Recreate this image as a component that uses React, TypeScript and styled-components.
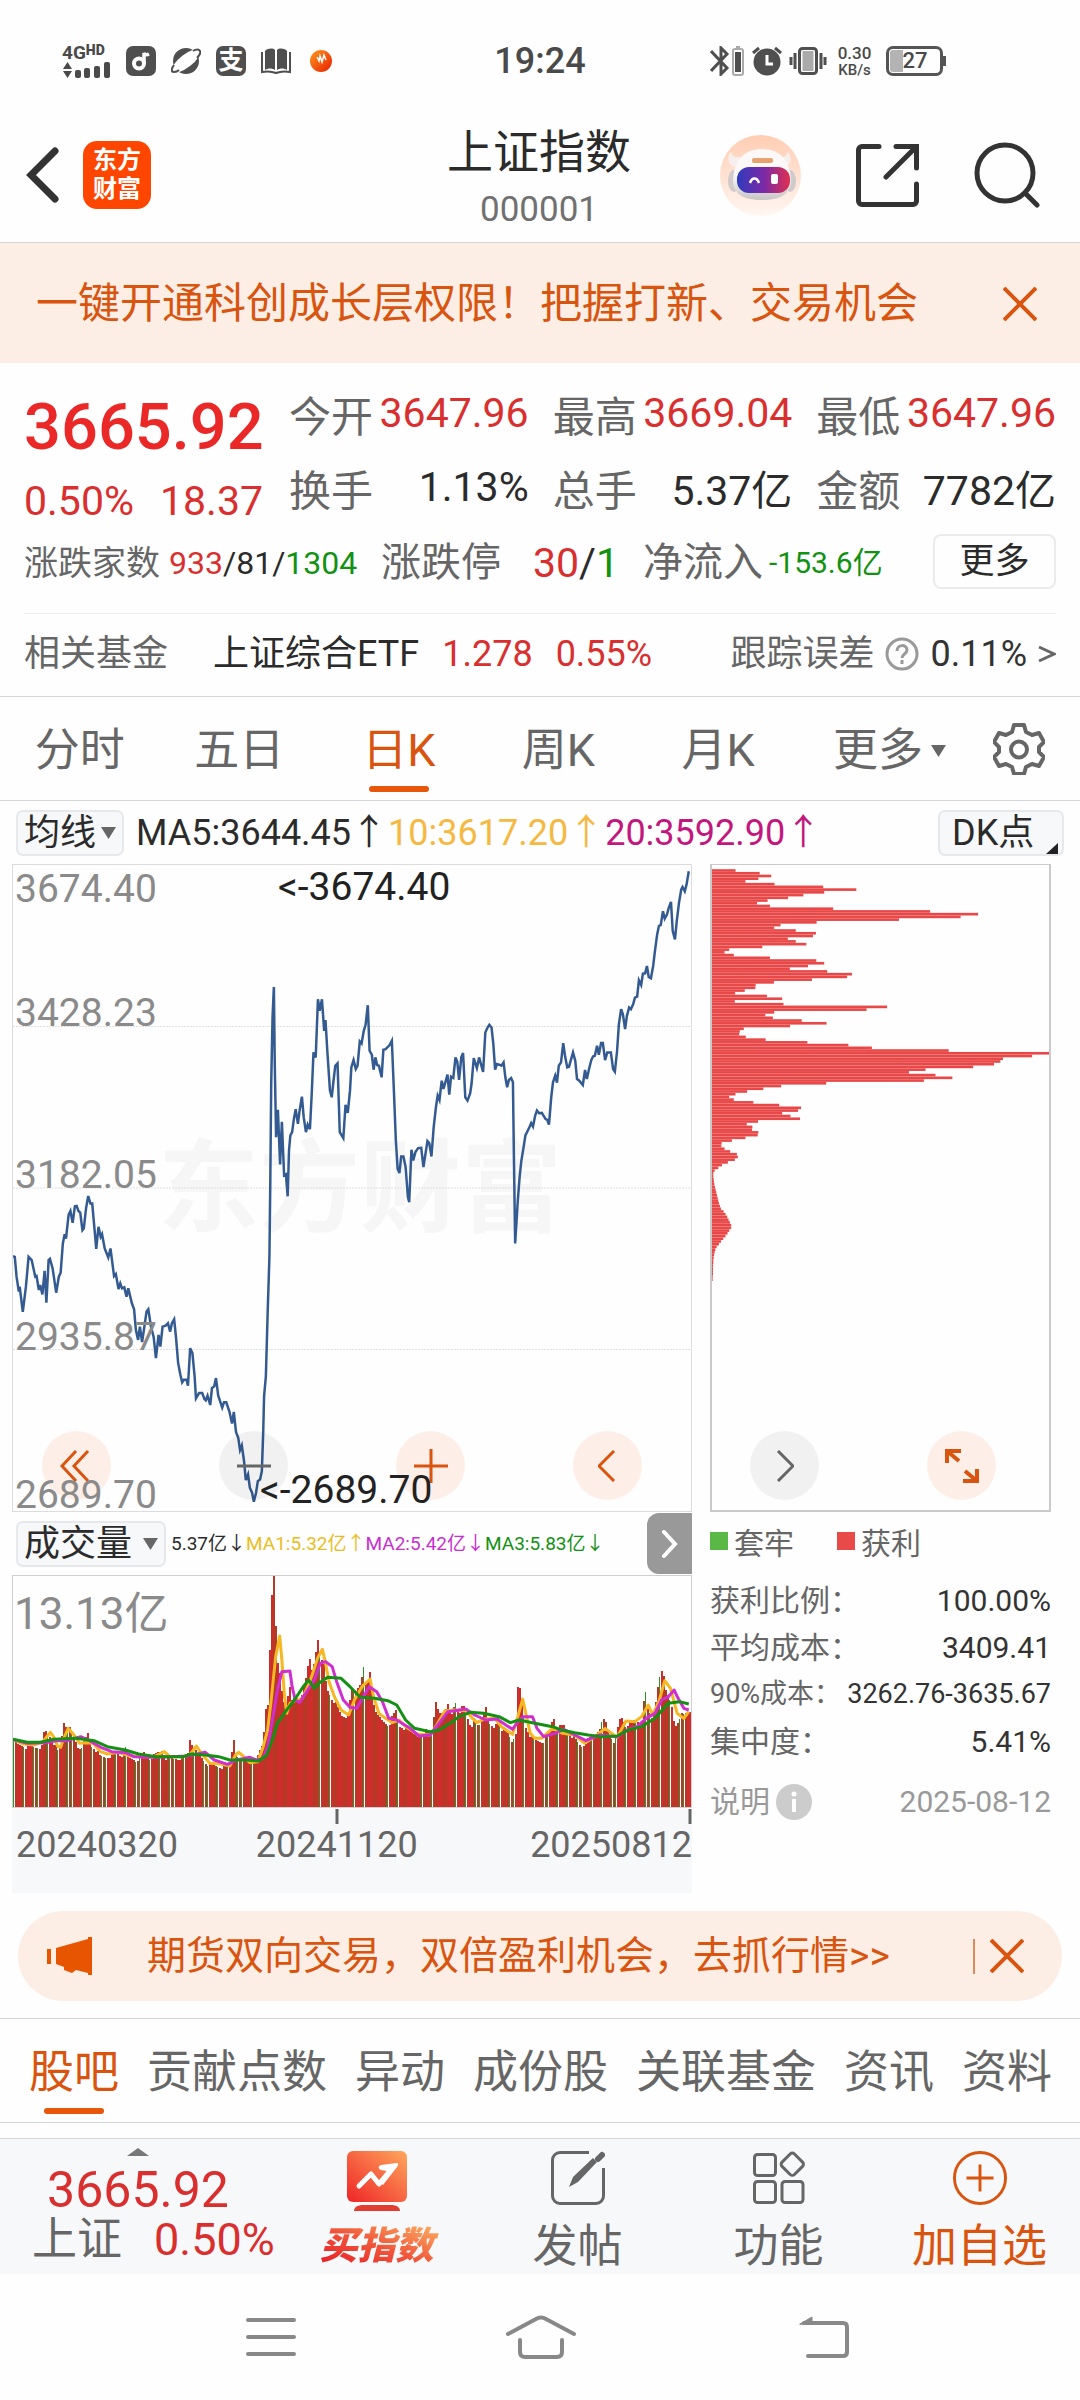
import React from "react";
import styled, { createGlobalStyle, css } from "styled-components";

const color = {
  ink: "#2b2b2b",
  text: "#333333",
  label: "#666666",
  muted: "#8a8a8a",
  rise: "#d92f2f",
  fall: "#129212",
  brand: "#d9540f",
  brandBright: "#e8560a",
  blush: "#fceee5",
  panel: "#f7f8fa",
  rule: "#d3d6d9",
};

const GlobalStyle = createGlobalStyle`
  * { box-sizing: border-box; }
  body {
    margin: 0;
    background: #fefefe;
    color: ${color.text};
    font-family: Roboto, "Noto Sans CJK SC", sans-serif;
  }
  button, select {
    font: inherit;
    color: inherit;
    background: none;
    border: 0;
    padding: 0;
    margin: 0;
    cursor: pointer;
  }
  a { color: inherit; text-decoration: none; }
  svg { display: block; flex: none; }
  h1, p, dl, dd, dt { margin: 0; font-weight: 400; }
`;

const Page = styled.div`
  display: flex;
  flex-direction: column;
  overflow: hidden;
`;

/* ---------- status bar ---------- */

const StatusBar = styled.div`
  display: grid;
  grid-template-columns: 1fr auto 1fr;
  align-items: center;
  height: 122px;
  padding: 0 62px;
  color: #4a4a4a;
`;

const StatusGroup = styled.div`
  display: flex;
  align-items: center;
  gap: 15px;
`;

const StatusRight = styled(StatusGroup)`
  gap: 7px;
  padding-left: 124px;
`;

const Clock = styled.time`
  font-size: 36px;
  font-weight: 500;
  line-height: 40px;
`;

const Signal = styled.div`
  width: 49px;
`;

const SignalText = styled.div`
  display: flex;
  align-items: flex-start;
  font-size: 19px;
  line-height: 18px;
  font-weight: 700;
`;

const SignalSup = styled.span`
  font-size: 14px;
  line-height: 12px;
  font-weight: 900;
`;

const NetSpeed = styled.div`
  font-size: 17px;
  line-height: 18px;
  font-weight: 500;
  text-align: center;
  margin: 0 8px 0 4px;
`;

const NetUnit = styled.div`
  font-size: 15px;
  line-height: 16px;
`;

const Battery = styled.div`
  display: flex;
  align-items: center;
`;

const BatteryBody = styled.div`
  width: 57px;
  height: 30px;
  border: 3px solid #555;
  border-radius: 7px;
  padding: 1px;
  font-size: 22px;
  line-height: 22px;
  font-weight: 500;
  text-align: center;
  background: linear-gradient(to right, #b3b3b3 13px, transparent 13px) content-box;
`;

const BatteryTip = styled.div`
  width: 3px;
  height: 10px;
  background: #555;
`;

/* ---------- header ---------- */

const Header = styled.header`
  display: grid;
  grid-template-columns: 1fr auto 1fr;
  align-items: start;
  height: 121px;
  padding: 0 40px 0 26px;
  border-bottom: 1px solid ${color.rule};
`;

const HeaderSide = styled.div<{ $end?: boolean }>`
  display: flex;
  align-items: center;
  height: 106px;
  gap: ${(p) => (p.$end ? 55 : 23)}px;
  justify-content: ${(p) => (p.$end ? "flex-end" : "flex-start")};
`;

const Brand = styled.div`
  width: 68px;
  height: 68px;
  padding: 5px 0;
  border-radius: 14px;
  background: #ff4600;
  color: #fff;
  font-size: 24px;
  line-height: 29px;
  font-weight: 700;
  text-align: center;
`;

const TitleBlock = styled.div`
  text-align: center;
  padding-left: 12px;
`;

const Title = styled.h1`
  font-size: 46px;
  line-height: 60px;
  color: ${color.ink};
`;

const Code = styled.p`
  font-size: 35px;
  line-height: 56px;
  color: #707070;
`;

/* ---------- top notice ---------- */

const Notice = styled.aside`
  display: flex;
  align-items: center;
  justify-content: space-between;
  height: 120px;
  padding: 2px 43px 0 36px;
  background: ${color.blush};
  color: ${color.brand};
  font-size: 42px;
  line-height: 60px;
`;

/* ---------- quote ---------- */

const Quote = styled.section`
  padding: 13px 24px 0;
  border-bottom: 1px solid ${color.rule};
`;

const QuoteGrid = styled.div`
  display: grid;
  grid-template-columns: 241px 1fr 1fr 1fr;
  column-gap: 24px;
  height: 158px;
`;

const PriceBlock = styled.div`
  padding-top: 14px;
  color: ${color.rise};
`;

const Price = styled.div`
  font-size: 65px;
  line-height: 74px;
  font-weight: 500;
  color: #ea2828;
  margin-bottom: 4px;
`;

const Change = styled.div`
  display: flex;
  justify-content: space-between;
  padding-right: 2px;
  font-size: 41px;
  line-height: 66px;
`;

const Cell = styled.div`
  display: flex;
  align-items: center;
  justify-content: space-between;
  height: 74px;
`;

const Tone = styled.span<{ $tone: keyof typeof color; $size?: number }>`
  color: ${(p) => color[p.$tone]};
  ${(p) => p.$size && css`font-size: ${p.$size}px;`}
`;

const Breadth = styled.div`
  display: grid;
  grid-template-columns: 333px 238px 1fr 123px;
  column-gap: 24px;
  align-items: center;
  height: 55px;
  margin-bottom: 24px;
  line-height: 52px;
`;

const BreadthItem = styled.div<{ $gap?: number }>`
  display: flex;
  align-items: center;
  justify-content: ${(p) => (p.$gap ? "flex-start" : "space-between")};
  gap: ${(p) => p.$gap ?? 0}px;
  padding-top: 3px;
  white-space: nowrap;
`;

const MoreButton = styled.button`
  height: 55px;
  border: 2px solid #ebebeb;
  border-radius: 8px;
  font-size: 35px;
  line-height: 48px;
  color: ${color.ink};
`;

const FundRow = styled.a`
  display: flex;
  align-items: center;
  height: 83px;
  padding-bottom: 2px;
  border-top: 1px solid #f0f0f0;
  font-size: 36px;
  line-height: 50px;
  white-space: nowrap;
`;

const FundName = styled.span`
  margin: 0 23px 0 45px;
  color: ${color.ink};
`;

const FundPrice = styled.span`
  margin-right: 23px;
`;

const FundError = styled.span`
  display: flex;
  align-items: center;
  gap: 11px;
  margin-left: auto;
`;

/* ---------- tabs ---------- */

const PeriodTabs = styled.nav`
  display: grid;
  grid-template-columns: repeat(6, 160fr) 123fr;
  height: 104px;
  border-bottom: 1px solid ${color.rule};
`;

const Tab = styled.button<{ $active?: boolean; $shift?: boolean }>`
  display: flex;
  flex-direction: column;
  align-items: center;
  padding-top: 24px;
  padding-left: ${(p) => (p.$shift ? 24 : 0)}px;
  font-size: 45px;
  line-height: 60px;
  white-space: nowrap;
  color: ${(p) => (p.$active ? color.brand : color.label)};

  &::after {
    content: "";
    width: 60px;
    height: 6px;
    margin-top: 5px;
    border-radius: 3px;
    background: ${(p) => (p.$active ? color.brandBright : "transparent")};
  }
`;

const TabLabel = styled.span`
  display: flex;
  align-items: center;
  gap: 8px;
`;

const IconButton = styled.button`
  display: grid;
  place-items: center;
`;

const SectionTabs = styled.nav`
  display: flex;
  gap: 28px;
  height: 105px;
  padding: 0 29px;
  border-top: 1px solid ${color.rule};
  border-bottom: 1px solid ${color.rule};
`;

/* ---------- indicator bars ---------- */

const AverageBar = styled.div`
  display: flex;
  align-items: center;
  height: 63px;
  padding: 0 16px;
  font-size: 36px;
  line-height: 46px;
  white-space: nowrap;
`;

const chip = css`
  height: 46px;
  border: 2px solid #e6e8eb;
  border-radius: 7px;
  background: ${color.panel};
  color: ${color.ink};
  font-size: 36px;
  line-height: 42px;
`;

const PickerBox = styled.span<{ $width: number }>`
  display: grid;
  align-items: center;
  width: ${(p) => p.$width}px;
  flex: none;

  > select, > svg { grid-area: 1 / 1; }
  > svg { justify-self: end; margin-right: 8px; pointer-events: none; }
`;

const Picker = styled.select`
  ${chip}
  width: 100%;
  padding: 0 0 0 6px;
  appearance: none;
`;

const DkButton = styled.button`
  ${chip}
  display: flex;
  align-items: flex-end;
  justify-content: space-between;
  width: 126px;
  margin-left: auto;
  padding: 0 4px 0 12px;
`;

const Averages = styled.div<{ $size: number; $gap: number }>`
  display: flex;
  gap: ${(p) => p.$gap}px;
  padding-left: ${(p) => (p.$size > 30 ? 12 : 5)}px;
  font-size: ${(p) => p.$size}px;
`;

const Average = styled.span<{ $color: string }>`
  color: ${(p) => p.$color};
`;

/* ---------- charts ---------- */

const Charts = styled.section`
  position: relative;
  display: grid;
  grid-template-columns: 680fr 341fr;
  column-gap: 18px;
  padding: 0 29px 0 12px;
`;

const PriceFrame = styled.div`
  position: relative;
  height: 648px;
  border: 1px solid #dcdcdc;
`;

const CostFrame = styled.div`
  height: 648px;
  border: 2px solid #cacaca;
  border-top-width: 1px;
`;

const PlotLayer = styled.div`
  position: absolute;
  inset: 0;
`;

const Plot = styled.svg`
  width: 100%;
  height: 100%;
`;

const Watermark = styled.div`
  position: absolute;
  inset: 250px auto auto 145px;
  font-size: 101px;
  line-height: 150px;
  font-weight: 700;
  color: #f6f6f6;
`;

const ScaleLabel = styled.span<{ $top: number }>`
  position: absolute;
  left: 2px;
  top: ${(p) => p.$top}px;
  z-index: 2;
  font-size: 39px;
  line-height: 40px;
  color: ${color.muted};
  pointer-events: none;
`;

const Extreme = styled(ScaleLabel)<{ $left: number }>`
  left: ${(p) => p.$left}px;
  color: #222;
`;

const ChartTools = styled.div`
  position: absolute;
  top: 567px;
  left: 42px;
  right: 84px;
  display: flex;
  justify-content: space-between;
`;

const RoundTool = styled.button<{ $quiet?: boolean }>`
  display: grid;
  place-items: center;
  width: 69px;
  height: 69px;
  border-radius: 50%;
  color: ${(p) => (p.$quiet ? "#666" : color.brand)};
  background: ${(p) => (p.$quiet ? "rgba(0,0,0,.05)" : "rgba(240,90,10,.09)")};
`;

const VolumeBar = styled.div`
  display: flex;
  align-items: center;
  height: 63px;
  padding-left: 4px;
  line-height: 46px;
  white-space: nowrap;
`;

const Expand = styled.button`
  display: grid;
  place-items: center;
  width: 45px;
  height: 61px;
  margin-left: auto;
  border-radius: 12px 0 0 12px;
  background: #999;
  color: #fff;
`;

const VolumeFrame = styled.div`
  position: relative;
  height: 233px;
  border: 1px solid #cfcfcf;
`;

const VolumeMax = styled.span`
  position: absolute;
  left: 1px;
  top: 13px;
  font-size: 44px;
  line-height: 50px;
  color: ${color.muted};
`;

const Axis = styled.div`
  height: 85px;
  background: ${color.panel};
`;

const AxisDates = styled.div`
  display: flex;
  padding: 0 0 0 4px;
  font-size: 36px;
  line-height: 40px;
  color: ${color.label};

  > :nth-child(2) { margin-left: 78px; }
  > :last-child { margin-left: auto; }
`;

const Legend = styled.div`
  display: flex;
  align-items: center;
  gap: 43px;
  height: 57px;
  font-size: 30px;
  color: ${color.label};
`;

const LegendItem = styled.span<{ $color: string }>`
  display: flex;
  align-items: center;
  gap: 6px;

  &::before {
    content: "";
    width: 18px;
    height: 18px;
    background: ${(p) => p.$color};
  }
`;

const Stats = styled.dl`
  padding-top: 8px;
`;

const Stat = styled.div<{ $size?: number }>`
  display: flex;
  justify-content: space-between;
  font-size: ${(p) => p.$size ?? 30}px;
  line-height: 47px;
  white-space: nowrap;

  dt { color: ${color.label}; }
`;

const StatFoot = styled.div`
  display: flex;
  align-items: center;
  justify-content: space-between;
  padding-top: 13px;
  font-size: 30px;
  line-height: 47px;
  color: #999;
`;

const Explain = styled.button`
  display: flex;
  align-items: center;
  gap: 6px;
`;

/* ---------- promo ---------- */

const Promo = styled.aside`
  display: flex;
  align-items: center;
  height: 90px;
  margin: 18px 18px 17px;
  padding: 0 38px 0 28px;
  border-radius: 45px;
  background: ${color.blush};
  color: ${color.brand};
  font-size: 39px;
  line-height: 50px;
  white-space: nowrap;
`;

const PromoLink = styled.a`
  margin-left: 54px;
`;

const PromoClose = styled(IconButton)`
  margin-left: auto;
  padding-left: 15px;
  height: 35px;
  border-left: 2px solid #e08a5c;
`;

/* ---------- bottom bar ---------- */

const BottomBar = styled.footer`
  display: grid;
  grid-template-columns: 276fr repeat(4, 201fr);
  height: 136px;
  margin-top: 15px;
  border-top: 1px solid ${color.rule};
  background: ${color.panel};
`;

const IndexButton = styled.button`
  display: flex;
  flex-direction: column;
  align-items: center;
  padding-top: 9px;
`;

const IndexPrice = styled.span`
  font-size: 50px;
  line-height: 50px;
  margin-top: 9px;
  color: ${color.rise};
`;

const IndexLine = styled.span`
  display: flex;
  gap: 32px;
  margin-left: 32px;
  font-size: 45px;
  line-height: 50px;
  align-self: flex-start;
  color: ${color.label};
`;

const Action = styled.button<{ $brand?: boolean }>`
  display: flex;
  flex-direction: column;
  align-items: center;
  padding-top: 12px;
  font-size: 45px;
  line-height: 60px;
  color: ${(p) => (p.$brand ? color.brand : color.label)};

  > svg { margin-bottom: 12px; }
`;

const BuyLabel = styled.span`
  padding: 0 6px;
  font-size: 38px;
  line-height: 46px;
  font-weight: 900;
  font-style: italic;
  color: transparent;
  background: linear-gradient(20deg, #e8262a 15%, #f0553a 50%, #fba35c 90%);
  background-clip: text;
  -webkit-background-clip: text;
`;

const SystemNav = styled.nav`
  display: flex;
  align-items: center;
  justify-content: space-between;
  height: 126px;
  padding: 0 230px 0 245px;
  color: #888;
`;

/* ---------- data ---------- */

const PRICE_LINE =
  "28,1218 32,1220 36,1280 41,1325 43,1310 50,1386 57,1310 63,1220 70,1230 78,1280 81,1278 86,1320 89,1305 94,1333 99,1262 103,1358 108,1230 111,1226 117,1255 125,1328 131,1280 135,1268 140,1180 144,1152 147,1165 153,1093 157,1082 162,1118 167,1068 171,1067 175,1082 179,1087 184,1140 187,1135 192,1075 197,1037 202,1060 206,1060 215,1196 220,1130 225,1160 228,1152 234,1195 242,1222 247,1195 255,1278 259,1272 265,1317 269,1300 273,1315 278,1312 283,1340 287,1315 295,1360 300,1378 304,1440 309,1470 313,1430 318,1477 328,1385 332,1378 338,1430 344,1462 349,1525 355,1455 359,1490 364,1430 371,1427 376,1420 381,1445 385,1420 390,1408 394,1460 399,1540 404,1575 408,1598 412,1590 418,1590 421,1608 426,1495 431,1510 436,1580 439,1646 446,1630 453,1630 458,1648 461,1652 465,1638 471,1666 475,1615 480,1610 484,1585 489,1638 498,1674 502,1658 507,1658 514,1685 520,1722 524,1687 529,1748 534,1765 538,1802 542,1788 547,1835 551,1892 556,1875 560,1915 565,1930 569,1957 574,1930 578,1895 583,1890 587,1865 590,1750 592,1640 596,1580 600,1390 604,1220 606,990 608,700 611,500 614,408 616,640 619,860 623,778 628,942 632,814 637,975 641,972 645,1038 648,900 651,855 655,845 659,805 663,776 668,820 672,778 677,738 681,800 686,845 690,822 695,836 699,730 703,605 708,620 713,445 717,480 722,445 727,540 730,508 734,600 740,720 744,740 748,690 752,645 757,638 762,845 770,863 775,763 780,787 785,720 788,650 793,628 798,655 802,645 807,572 811,578 816,540 820,522 825,463 829,600 834,612 838,657 842,620 846,643 850,645 856,680 860,597 865,595 874,583 879,570 883,700 888,870 892,955 896,968 900,918 905,918 910,950 915,1040 918,1056 923,898 927,930 932,905 938,893 945,892 950,950 959,872 963,878 968,918 973,830 978,770 982,735 986,748 991,690 995,715 1004,672 1008,732 1012,678 1017,682 1022,620 1026,633 1030,688 1035,620 1039,607 1044,740 1049,750 1055,728 1058,700 1063,622 1070,652 1075,620 1084,664 1089,545 1094,530 1098,522 1103,530 1107,580 1111,657 1115,640 1120,642 1125,645 1130,635 1134,680 1138,710 1142,688 1147,682 1151,695 1153,900 1156,1180 1162,1050 1166,980 1170,930 1175,890 1179,855 1188,830 1192,818 1196,828 1201,795 1205,780 1210,788 1216,787 1224,805 1228,808 1232,822 1237,740 1241,695 1246,675 1250,696 1254,645 1259,635 1264,577 1268,615 1273,650 1277,648 1286,605 1291,630 1295,685 1300,690 1308,703 1313,658 1317,685 1322,655 1327,628 1331,617 1335,615 1340,585 1344,612 1349,577 1353,577 1358,628 1363,605 1371,605 1376,655 1380,663 1385,600 1389,520 1394,475 1398,490 1403,535 1407,495 1412,470 1416,475 1421,460 1425,440 1430,437 1434,388 1439,402 1443,368 1448,367 1452,345 1456,378 1461,382 1466,345 1470,300 1475,250 1479,224 1483,222 1488,180 1492,202 1497,190 1501,170 1506,152 1510,240 1515,265 1519,210 1524,155 1529,115 1532,107 1537,120 1541,100 1546,60";

const COST_BARS = [
  71, 144, 179, 140, 101, 189, 336, 436, 339, 276, 230, 168, 136, 175, 366, 659, 804, 751, 565, 316, 207, 188, 253, 314,
  305, 229, 253, 285, 152, 52, 38, 66, 175, 315, 339, 290, 235, 348, 423, 408, 302, 187, 132, 131, 99, 70, 166, 212, 69,
  216, 529, 467, 188, 161, 184, 271, 346, 236, 96, 84, 82, 102, 162, 288, 412, 483, 715, 1018, 967, 879, 871, 852, 789,
  645, 595, 675, 726, 640, 345, 209, 155, 106, 71, 52, 66, 125, 203, 269, 260, 212, 237, 266, 139, 105, 122, 121, 140,
  138, 101, 60, 29, 28, 38, 55, 75, 78, 69, 48, 30, 19, 8, 4, 4, 5, 6, 7, 9, 11, 13, 15, 17, 19, 21, 24, 27, 35, 41, 46,
  50, 54, 58, 58, 52, 47, 41, 34, 27, 21, 14, 10, 8, 6, 5, 4, 4, 3, 3, 3, 3, 2, 2,
];

const VOLUME_TOPS: [number, number][] = [
  [28, 722], [60, 735], [95, 735], [99, 672], [104, 700], [112, 705], [125, 735], [132, 755], [140, 685], [144, 648],
  [148, 680], [155, 678], [162, 690], [175, 740], [185, 730], [198, 690], [204, 730], [215, 745], [225, 765], [240, 765],
  [262, 755], [272, 765], [279, 732], [290, 770], [305, 775], [324, 750], [335, 770], [355, 752], [364, 743], [372, 770],
  [395, 770], [420, 765], [427, 698], [432, 740], [445, 760], [465, 785], [490, 795], [515, 790], [525, 706], [530, 770],
  [545, 775], [575, 775], [580, 750], [590, 720], [593, 660], [598, 612], [603, 612], [607, 333], [613, 228], [617, 228],
  [619, 395], [623, 475], [628, 520], [633, 580], [640, 620], [650, 550], [655, 590], [665, 600], [675, 590], [690, 500],
  [696, 470], [700, 510], [705, 480], [713, 408], [720, 475], [727, 490], [733, 560], [745, 590], [755, 610], [765, 640],
  [778, 645], [785, 600], [790, 560], [797, 570], [808, 545], [816, 495], [822, 560], [830, 510], [838, 600], [848, 645],
  [860, 660], [872, 670], [888, 625], [895, 670], [910, 680], [925, 690], [940, 700], [950, 700], [957, 675], [965, 690],
  [972, 680], [977, 598], [985, 635], [995, 630], [1004, 604], [1012, 650], [1022, 595], [1030, 630], [1040, 612],
  [1050, 650], [1058, 680], [1063, 640], [1075, 680], [1090, 608], [1098, 670], [1110, 680], [1117, 645], [1125, 680],
  [1140, 695], [1150, 720], [1158, 690], [1161, 565], [1166, 553], [1171, 600], [1178, 670], [1190, 700], [1200, 715],
  [1220, 720], [1235, 680], [1242, 645], [1250, 680], [1265, 670], [1275, 690], [1290, 710], [1305, 735], [1320, 715],
  [1340, 690], [1358, 650], [1365, 690], [1380, 720], [1392, 650], [1396, 648], [1405, 670], [1425, 655], [1440, 660],
  [1444, 618], [1449, 565], [1454, 620], [1465, 650], [1474, 580], [1480, 540], [1484, 508], [1489, 508], [1494, 560],
  [1505, 590], [1515, 680], [1525, 655], [1532, 625], [1540, 640], [1552, 630],
];

const VOLUME_AVERAGES = [
  {
    color: "#f5b722",
    points:
      "28,718 50,732 75,735 95,725 112,697 120,712 128,738 135,742 142,715 152,685 165,705 178,730 195,728 208,730 225,755 240,762 265,757 290,768 320,770 345,770 368,755 380,770 410,770 425,765 440,738 450,758 470,790 495,792 515,798 528,765 535,757 545,768 560,788 578,785 590,740 600,690 608,600 618,470 627,408 632,480 638,590 643,640 650,610 665,600 678,595 690,560 700,525 712,475 723,448 730,490 738,545 750,590 765,630 782,645 795,600 812,560 830,537 838,590 850,640 865,655 880,668 895,660 910,680 935,702 965,705 980,675 998,633 1020,630 1045,632 1060,655 1070,668 1085,658 1110,655 1125,680 1150,703 1162,650 1173,597 1180,640 1190,700 1200,715 1215,715 1240,685 1262,700 1290,705 1312,730 1330,715 1358,685 1385,712 1405,663 1425,665 1440,650 1455,615 1465,645 1480,600 1492,542 1505,565 1520,640 1535,655 1546,635",
  },
  {
    color: "#cf2fcf",
    points:
      "28,718 60,730 100,728 125,722 150,722 180,710 200,722 225,742 250,755 280,758 300,770 340,772 380,770 420,768 460,757 480,780 510,793 530,780 560,772 575,780 590,775 600,740 612,650 622,570 632,515 650,513 655,560 662,600 672,607 690,570 705,540 718,490 730,485 745,500 755,545 770,600 785,622 800,625 815,590 828,560 845,575 858,605 872,655 890,660 920,685 940,708 965,705 985,670 1005,635 1045,627 1065,645 1090,660 1115,657 1150,688 1165,660 1175,650 1195,650 1205,685 1220,710 1245,700 1265,688 1290,705 1315,722 1345,705 1385,710 1410,688 1430,680 1450,655 1470,640 1485,600 1500,590 1513,570 1522,595 1535,625 1546,630",
  },
  {
    color: "#149014",
    points:
      "28,718 60,727 90,727 120,718 170,715 210,722 240,740 280,750 310,762 350,770 410,770 430,762 460,765 490,770 515,780 550,780 580,783 598,765 610,720 622,670 640,635 660,600 680,560 692,540 705,565 715,550 735,532 765,535 785,560 808,592 840,595 870,602 890,615 910,660 930,685 965,695 985,690 1010,670 1030,650 1055,637 1085,640 1120,650 1145,668 1165,660 1200,670 1240,680 1260,690 1290,698 1320,705 1350,710 1385,708 1410,690 1440,680 1470,655 1500,610 1525,605 1546,612",
  },
];

const BAR_COUNT = 339;
const PITCH = 1523 / BAR_COUNT;

function topAt(x: number) {
  const k = VOLUME_TOPS.findIndex(([px]) => px > x);
  if (k <= 0) return VOLUME_TOPS[0][1];
  const [x0, y0] = VOLUME_TOPS[k - 1];
  const [x1, y1] = VOLUME_TOPS[k];
  return y0 + ((y1 - y0) * (x - x0)) / (x1 - x0);
}

const VOLUME_BARS = Array.from({ length: BAR_COUNT }, (_, i) => {
  const x = 28 + i * PITCH;
  const limit = x > 565 && x < 680 ? 0 : x > 680 && x < 1030 ? 3 : 5;
  const down = (i * 37 + i * i * 13) % 17 < limit;
  const jitter = ((i * 29) % 7) * 2;
  const top = topAt(x + PITCH / 2) + (x > 600 && x < 620 ? 0 : jitter);
  const fill = down ? "#2f8f2a" : (i * i * 7 + i * 3) % 5 < 2 ? "#b53a26" : "#cf2c2c";
  return { x, top, fill, width: down ? PITCH / 2 : PITCH };
});

/* ---------- icons ---------- */

const Line = (p: React.SVGProps<SVGSVGElement>) => (
  <svg fill="none" stroke="currentColor" strokeWidth={3} aria-hidden="true" {...p} />
);

const Cross = () => (
  <Line width={34} height={34} viewBox="0 0 34 34" strokeWidth={4}>
    <path d="M1 1 33 33M33 1 1 33" />
  </Line>
);

const Down = ({ w = 15, h = 12 }) => (
  <svg width={w} height={h} viewBox="0 0 15 12" fill="#666" aria-hidden="true">
    <path d="M0 0h15L7.500 12z" />
  </svg>
);

const SignalBars = () => (
  <svg width="48" height="16" viewBox="0 0 48 16" fill="#4a4a4a">
    <path d="M5.500 0 10 7H1zM5.500 16 10 9H1z" />
    <rect x="13" y="8" width="6" height="8" rx="2" />
    <rect x="22" y="6" width="6" height="10" rx="2" />
    <rect x="32" y="4" width="6" height="12" rx="2" />
    <rect x="42" y="0" width="6" height="16" rx="2" />
  </svg>
);

const MusicApp = () => (
  <svg width="30" height="30" viewBox="0 0 30 30">
    <rect width="30" height="30" rx="7" fill="#4f4f4f" />
    <circle cx="13" cy="17.500" r="5" fill="none" stroke="#fff" strokeWidth="4" />
    <path d="M18 18V7c1 2 3 2 5 1" fill="none" stroke="#fff" strokeWidth="3.500" />
  </svg>
);

const Planet = () => (
  <svg width="30" height="30" viewBox="0 0 30 30">
    <circle cx="15" cy="15" r="13" fill="#4f4f4f" />
    <ellipse cx="15" cy="15" rx="17" ry="6.500" transform="rotate(-38 15 15)" fill="#fff" />
    <path d="M3 19c-3 4-3 7 0 7 2 0 4-1 5-2M22 5c3-2 6-2 7 0s-1 5-3 7" fill="none" stroke="#4f4f4f" strokeWidth="2" />
  </svg>
);

const PayTile = styled.span`
  display: grid;
  place-items: center;
  width: 30px;
  height: 30px;
  border-radius: 7px;
  background: #4f4f4f;
  color: #fff;
  font-size: 25px;
  line-height: 28px;
  font-weight: 700;
`;

const Book = () => (
  <svg width="30" height="26" viewBox="0 0 30 26" fill="#4f4f4f">
    <path d="M4 3C7 0 12 0 14 2v20c-3-2-7-2-10 0zM26 3c-3-3-8-3-10-1v20c3-2 7-2 10 0z" />
    <path d="M1 4v20c5-1 9-1 14 1 5-2 9-2 14-1V4" fill="none" stroke="#4f4f4f" strokeWidth="2" />
  </svg>
);

const Orb = () => (
  <svg width="30" height="22" viewBox="0 0 30 22">
    <defs>
      <linearGradient id="orb" x1="0" y1="0" x2="1" y2="1">
        <stop offset="0" stopColor="#ff9a1f" />
        <stop offset="1" stopColor="#e81c00" />
      </linearGradient>
    </defs>
    <circle cx="15" cy="11" r="11" fill="url(#orb)" />
    <path d="m11 7 2 4 1-5 2 6 2-7 2 5" fill="none" stroke="#fff" strokeWidth="1.500" />
  </svg>
);

const Bluetooth = () => (
  <svg width="35" height="30" viewBox="0 0 35 30">
    <path d="m1 5 16 17-6 6V2l6 6L1 25" fill="none" stroke="#4f4f4f" strokeWidth="3" />
    <rect x="23" y="3" width="10" height="26" rx="2" fill="#fff" stroke="#aaa" strokeWidth="2" />
    <path d="M26 1h4" stroke="#aaa" strokeWidth="2" />
    <rect x="25" y="6" width="6" height="20" fill="#4f4f4f" />
  </svg>
);

const Alarm = () => (
  <svg width="30" height="30" viewBox="0 0 30 30">
    <circle cx="15" cy="16" r="13.500" fill="#4f4f4f" />
    <path d="M15 9v9h6" fill="none" stroke="#fff" strokeWidth="3" />
    <path d="m1 7 6-5M29 7l-6-5" stroke="#4f4f4f" strokeWidth="3" />
  </svg>
);

const Vibrate = () => (
  <svg width="38" height="30" viewBox="0 0 38 30">
    <rect x="10.500" y="2.500" width="17" height="25" rx="3" fill="#fff" stroke="#4f4f4f" strokeWidth="3" />
    <rect x="13.500" y="5" width="11" height="20" fill="#aaa" />
    <path d="M6 7v16M2 11v8M32 7v16M36 11v8" stroke="#4f4f4f" strokeWidth="3" />
  </svg>
);

const Robot = () => (
  <svg width="81" height="81" viewBox="0 0 81 81">
    <defs>
      <linearGradient id="halo" x1="0" y1="0" x2="0" y2="1">
        <stop offset="0" stopColor="#ffcdb2" />
        <stop offset="1" stopColor="#fff6f1" />
      </linearGradient>
      <linearGradient id="visor" x1="0" y1="0" x2="1" y2="0">
        <stop offset="0" stopColor="#2f3bbd" />
        <stop offset=".5" stopColor="#7a2aa8" />
        <stop offset="1" stopColor="#e0304f" />
      </linearGradient>
      <linearGradient id="shell" x1="0" y1="0" x2="0" y2="1">
        <stop offset=".5" stopColor="#fbf8f7" />
        <stop offset="1" stopColor="#c9c4c6" />
      </linearGradient>
    </defs>
    <circle cx="40.500" cy="40.500" r="40.500" fill="url(#halo)" />
    <path d="M11 17c-5 6-3 15 7 16l7-11c-8 1-13 0-14-5zM68 17c5 6 3 15-7 16l-7-11c8 1 13 0 14-5z" fill="#f6efed" />
    <ellipse cx="14" cy="46" rx="6" ry="11" fill="#d0cacc" />
    <ellipse cx="70" cy="46" rx="6" ry="11" fill="#d0cacc" />
    <path d="M42 14c20 0 28 14 29 31 0 14-10 20-29 20S13 59 13 45c1-17 9-31 29-31z" fill="url(#shell)" />
    <rect x="32" y="23" width="21" height="5" rx="2" fill="#e6a36f" />
    <rect x="17" y="32" width="53" height="26" rx="12" fill="url(#visor)" />
    <path d="M30 48c2-6 7-6 9 0" fill="none" stroke="#fff" strokeWidth="2.500" />
    <rect x="51" y="39" width="7" height="10" rx="2" fill="#fff" />
  </svg>
);

const Gear = () => (
  <Line width={52} height={52} viewBox="0 0 52 52" strokeWidth={4} strokeLinejoin="round">
    <path d="M21 2h10l2 7 6 3 7-2 5 9-5 5v5l5 5-5 9-7-2-6 3-2 7H21l-2-7-6-3-7 2-5-9 5-5v-5l-5-5 5-9 7 2 6-3z" />
    <circle cx="26" cy="26.500" r="8" />
  </Line>
);

const Horn = () => (
  <svg width="47" height="40" viewBox="0 0 47 40" fill="#e85500" aria-hidden="true">
    <path d="M1 13h4v15H1zM10 12 42 3V1h4v38h-4v-2l-12-3-4 3-8-3v-3l-8-3z" />
  </svg>
);

const BuyIcon = () => (
  <svg width="60" height="60" viewBox="0 0 60 60" aria-hidden="true">
    <defs>
      <linearGradient id="buy" x1="0" y1="1" x2="1" y2="0">
        <stop offset="0" stopColor="#ee2427" />
        <stop offset="1" stopColor="#ffa75c" />
      </linearGradient>
    </defs>
    <rect width="60" height="51" rx="6" fill="url(#buy)" />
    <path d="M7 60c0-4 4-6 9-6h28c5 0 9 2 9 6z" fill="#e33c30" />
    <path d="m12 35 12-12 8 10 10-12" fill="none" stroke="#fff" strokeWidth="5" strokeLinecap="round" strokeLinejoin="round" />
    <path d="M34 14 50 12c2 0 1 3 0 4L36 34l-4-3 8-11-6-1c-3-1-3-4 0-5z" fill="#fff" />
  </svg>
);

const ComposeIcon = () => (
  <svg width="54" height="54" viewBox="0 0 54 54" fill="none" stroke="#666" strokeWidth="3" aria-hidden="true">
    <path d="M38 1.500H9A7.500 7.500 0 0 0 1.500 9v36A7.500 7.500 0 0 0 9 52.500h36a7.500 7.500 0 0 0 7.500-7.500V17" />
    <path d="m18 36 4-10L42 7l4 4-19 20z" fill="#666" stroke="none" />
    <path d="M47 8 51 4" strokeWidth="6" strokeLinecap="round" />
  </svg>
);

const GridIcon = () => (
  <svg width="54" height="54" viewBox="0 0 54 54" fill="none" stroke="#666" strokeWidth="3" aria-hidden="true">
    <rect x="2.500" y="3.500" width="21" height="21" rx="3" />
    <rect x="2.500" y="30.500" width="21" height="21" rx="3" />
    <rect x="30" y="30.500" width="21" height="21" rx="3" />
    <rect x="31.500" y="4.500" width="17.500" height="17.500" rx="3" transform="rotate(45 40.300 13.300)" />
  </svg>
);

/* ---------- page ---------- */

const SUMMARY = [
  { label: "今开", value: "3647.96", tone: "rise" },
  { label: "换手", value: "1.13%", tone: "ink" },
  { label: "最高", value: "3669.04", tone: "rise" },
  { label: "总手", value: "5.37亿", tone: "ink" },
  { label: "最低", value: "3647.96", tone: "rise" },
  { label: "金额", value: "7782亿", tone: "ink" },
] as const;

const STATS = [
  { label: "获利比例：", value: "100.00%" },
  { label: "平均成本：", value: "3409.41" },
  { label: "90%成本：", value: "3262.76-3635.67", size: 27 },
  { label: "集中度：", value: "5.41%" },
];

const PERIODS = ["分时", "五日", "日K", "周K", "月K"];
const SECTIONS = ["股吧", "贡献点数", "异动", "成份股", "关联基金", "资讯", "资料"];

const stroke = { vectorEffect: "non-scaling-stroke" as const, fill: "none" };

export default function App() {
  return (
    <Page>
      <GlobalStyle />

      <StatusBar>
        <StatusGroup>
          <Signal>
            <SignalText>
              4G<SignalSup>HD</SignalSup>
            </SignalText>
            <SignalBars />
          </Signal>
          <MusicApp />
          <Planet />
          <PayTile>支</PayTile>
          <Book />
          <Orb />
        </StatusGroup>
        <Clock>19:24</Clock>
        <StatusRight>
          <Bluetooth />
          <Alarm />
          <Vibrate />
          <NetSpeed>
            0.30<NetUnit>KB/s</NetUnit>
          </NetSpeed>
          <Battery>
            <BatteryBody>27</BatteryBody>
            <BatteryTip />
          </Battery>
        </StatusRight>
      </StatusBar>

      <Header>
        <HeaderSide>
          <IconButton aria-label="返回">
            <Line width={34} height={56} viewBox="0 0 34 56" strokeWidth={7} stroke="#333" strokeLinecap="round">
              <path d="M29 4 5 28l24 24" />
            </Line>
          </IconButton>
          <Brand>
            东方
            <br />
            财富
          </Brand>
        </HeaderSide>
        <TitleBlock>
          <Title>上证指数</Title>
          <Code>000001</Code>
        </TitleBlock>
        <HeaderSide $end>
          <IconButton aria-label="智能助手">
            <Robot />
          </IconButton>
          <IconButton aria-label="分享">
            <Line width={63} height={63} viewBox="0 0 63 63" strokeWidth={5} stroke="#333" strokeLinecap="round">
              <path d="M23 2.500H6A3.500 3.500 0 0 0 2.500 6v51A3.500 3.500 0 0 0 6 60.500h51a3.500 3.500 0 0 0 3.500-3.500V40M40 2.500h20.500V24M60 3 30 33" />
            </Line>
          </IconButton>
          <IconButton aria-label="搜索">
            <Line width={66} height={66} viewBox="0 0 66 66" strokeWidth={5} stroke="#333" strokeLinecap="round">
              <circle cx="31" cy="31" r="28" />
              <path d="m51 51 12 12" />
            </Line>
          </IconButton>
        </HeaderSide>
      </Header>

      <Notice>
        <a href="#open">一键开通科创成长层权限！把握打新、交易机会</a>
        <IconButton aria-label="关闭">
          <Cross />
        </IconButton>
      </Notice>

      <Quote>
        <QuoteGrid>
          <PriceBlock>
            <Price>3665.92</Price>
            <Change>
              <span>0.50%</span>
              <span>18.37</span>
            </Change>
          </PriceBlock>
          {[0, 2, 4].map((k) => (
            <div key={k}>
              {SUMMARY.slice(k, k + 2).map((item) => (
                <Cell key={item.label}>
                  <Tone $tone="label" $size={42}>{item.label}</Tone>
                  <Tone $tone={item.tone} $size={41}>{item.value}</Tone>
                </Cell>
              ))}
            </div>
          ))}
        </QuoteGrid>
        <Breadth>
          <BreadthItem $gap={9}>
            <Tone $tone="label" $size={34}>涨跌家数</Tone>
            <Tone $tone="ink" $size={32}>
              <Tone $tone="rise">933</Tone>/81/<Tone $tone="fall">1304</Tone>
            </Tone>
          </BreadthItem>
          <BreadthItem>
            <Tone $tone="label" $size={40}>涨跌停</Tone>
            <Tone $tone="ink" $size={41}>
              <Tone $tone="rise">30</Tone>/<Tone $tone="fall">1</Tone>
            </Tone>
          </BreadthItem>
          <BreadthItem $gap={6}>
            <Tone $tone="label" $size={40}>净流入</Tone>
            <Tone $tone="fall" $size={30}>-153.6亿</Tone>
          </BreadthItem>
          <MoreButton>更多</MoreButton>
        </Breadth>
        <FundRow href="#fund">
          <Tone $tone="label">相关基金</Tone>
          <FundName>上证综合ETF</FundName>
          <FundPrice>
            <Tone $tone="rise">1.278</Tone>
          </FundPrice>
          <Tone $tone="rise">0.55%</Tone>
          <FundError>
            <Tone $tone="label">跟踪误差</Tone>
            <svg width="34" height="34" viewBox="0 0 34 34" fill="none" stroke="#999" strokeWidth="3">
              <circle cx="17" cy="17" r="15" />
              <path d="M12 14c0-7 10-7 10-1 0 4-5 4-5 8M17 23v4" />
            </svg>
            <span>0.11%</span>
            <Line width={18} height={18} viewBox="0 0 18 18" strokeWidth={3} stroke="#666">
              <path d="m1 2 15 7-15 7" />
            </Line>
          </FundError>
        </FundRow>
      </Quote>

      <PeriodTabs>
        {PERIODS.map((name) => (
          <Tab key={name} $active={name === "日K"}>
            {name}
          </Tab>
        ))}
        <Tab $shift>
          <TabLabel>
            更多
            <Down />
          </TabLabel>
        </Tab>
        <IconButton aria-label="设置">
          <Tone $tone="label">
            <Gear />
          </Tone>
        </IconButton>
      </PeriodTabs>

      <AverageBar>
        <PickerBox $width={108}>
          <Picker aria-label="主图指标">
            <option>均线</option>
          </Picker>
          <Down />
        </PickerBox>
        <Averages $size={36} $gap={1}>
          <Average $color={color.ink}>MA5:3644.45↑</Average>
          <Average $color="#f5b942">10:3617.20↑</Average>
          <Average $color="#c2187e">20:3592.90↑</Average>
        </Averages>
        <DkButton>
          DK点
          <svg width="12" height="11" viewBox="0 0 12 11" fill="#222">
            <path d="M12 0v11H0z" />
          </svg>
        </DkButton>
      </AverageBar>

      <Charts>
        <div>
          <PriceFrame>
            <Watermark>东方财富</Watermark>
            <ScaleLabel $top={4}>3674.40</ScaleLabel>
            <ScaleLabel $top={128}>3428.23</ScaleLabel>
            <ScaleLabel $top={290}>3182.05</ScaleLabel>
            <ScaleLabel $top={452}>2935.87</ScaleLabel>
            <ScaleLabel $top={610}>2689.70</ScaleLabel>
            <Extreme $top={2} $left={265}>&lt;-3674.40</Extreme>
            <Extreme $top={605} $left={247}>&lt;-2689.70</Extreme>
            <PlotLayer>
              <Plot viewBox="28 41 1523 1944" preserveAspectRatio="none" role="img" aria-label="日K走势">
                {[527, 1013, 1499].map((y) => (
                  <line key={y} x1="28" x2="1551" y1={y} y2={y} stroke="#e0e0e0" strokeDasharray="2 1" {...stroke} />
                ))}
                <polyline points={PRICE_LINE} stroke="#345b91" strokeWidth="2.500" {...stroke} />
              </Plot>
            </PlotLayer>
          </PriceFrame>

          <VolumeBar>
            <PickerBox $width={150}>
              <Picker aria-label="副图指标">
                <option>成交量</option>
              </Picker>
              <Down />
            </PickerBox>
            <Averages $size={19} $gap={0}>
              <Average $color={color.ink}>5.37亿↓</Average>
              <Average $color="#ecbd23">MA1:5.32亿↑</Average>
              <Average $color="#c92fd0">MA2:5.42亿↓</Average>
              <Average $color="#129212">MA3:5.83亿↓</Average>
            </Averages>
            <Expand aria-label="展开">
              <Line width={17} height={28} viewBox="0 0 17 28" strokeWidth={4} strokeLinecap="round">
                <path d="m3 2 11 12L3 26" />
              </Line>
            </Expand>
          </VolumeBar>

          <VolumeFrame>
            <Plot viewBox="28 228 1523 693" preserveAspectRatio="none" role="img" aria-label="成交量">
              {VOLUME_BARS.map((b) => (
                <rect
                  key={b.x}
                  x={b.x}
                  y={b.top}
                  width={b.width}
                  height={921 - b.top}
                  fill={b.fill}
                  shapeRendering="crispEdges"
                />
              ))}
              {VOLUME_AVERAGES.map((line) => (
                <polyline
                  key={line.color}
                  points={line.points}
                  stroke={line.color}
                  strokeWidth="3"
                  strokeLinejoin="round"
                  {...stroke}
                />
              ))}
            </Plot>
            <VolumeMax>13.13亿</VolumeMax>
          </VolumeFrame>

          <Axis>
            <svg width="100%" height="17" viewBox="0 0 680 17" preserveAspectRatio="none" stroke="#666" strokeWidth="3">
              <path d="M325 1v15M678 1v15" />
            </svg>
            <AxisDates>
              <span>20240320</span>
              <span>20241120</span>
              <span>20250812</span>
            </AxisDates>
          </Axis>
        </div>

        <div>
          <CostFrame>
            <Plot viewBox="32 34 1018 1537" preserveAspectRatio="none" role="img" aria-label="筹码分布">
              {COST_BARS.map((w, i) => (
                <rect key={i} x="32" y={44 + i * 6.5} width={w} height="6.3" fill="#e84848" />
              ))}
            </Plot>
          </CostFrame>
          <Legend>
            <LegendItem $color="#5ab946">套牢</LegendItem>
            <LegendItem $color="#e84a4a">获利</LegendItem>
          </Legend>
          <Stats>
            {STATS.map((s) => (
              <Stat key={s.label} $size={s.size}>
                <dt>{s.label}</dt>
                <dd>{s.value}</dd>
              </Stat>
            ))}
          </Stats>
          <StatFoot>
            <Explain>
              说明
              <svg width="36" height="36" viewBox="0 0 36 36">
                <circle cx="18" cy="18" r="18" fill="#ccc" />
                <circle cx="18" cy="10" r="2.500" fill="#fff" />
                <path d="M18 15v13" stroke="#fff" strokeWidth="4" />
              </svg>
            </Explain>
            <time>2025-08-12</time>
          </StatFoot>
        </div>

        <ChartTools>
          <RoundTool aria-label="快退">
            <Line width={34} height={32} viewBox="0 0 34 32">
              <path d="M16 1 2 16l14 15M28 1 14 16l14 15" />
            </Line>
          </RoundTool>
          <RoundTool $quiet aria-label="缩小">
            <Line width={34} height={34} viewBox="0 0 34 34">
              <path d="M0 17h34" />
            </Line>
          </RoundTool>
          <RoundTool aria-label="放大">
            <Line width={34} height={34} viewBox="0 0 34 34">
              <path d="M0 17h34M17 0v34" />
            </Line>
          </RoundTool>
          <RoundTool aria-label="左移">
            <Line width={20} height={32} viewBox="0 0 20 32">
              <path d="M16 1 1 16l15 15" />
            </Line>
          </RoundTool>
          <RoundTool $quiet aria-label="右移">
            <Line width={18} height={32} viewBox="0 0 18 32">
              <path d="m2 1 15 15L2 31" />
            </Line>
          </RoundTool>
          <RoundTool aria-label="全屏">
            <Line width={34} height={34} viewBox="0 0 34 34" strokeWidth={4}>
              <path d="M2 14V2h14M2 2l12 10M32 20v12H18M32 32 20 22" />
            </Line>
          </RoundTool>
        </ChartTools>
      </Charts>

      <Promo>
        <Horn />
        <PromoLink href="#futures">期货双向交易，双倍盈利机会，去抓行情&gt;&gt;</PromoLink>
        <PromoClose aria-label="关闭广告">
          <Cross />
        </PromoClose>
      </Promo>

      <SectionTabs>
        {SECTIONS.map((name, i) => (
          <Tab key={name} $active={i === 0}>
            {name}
          </Tab>
        ))}
      </SectionTabs>

      <BottomBar>
        <IndexButton>
          <svg width="22" height="8" viewBox="0 0 22 8" fill="#777">
            <path d="M11 0 22 8H0z" />
          </svg>
          <IndexPrice>3665.92</IndexPrice>
          <IndexLine>
            上证 <Tone $tone="rise">0.50%</Tone>
          </IndexLine>
        </IndexButton>
        <Action>
          <BuyIcon />
          <BuyLabel>买指数</BuyLabel>
        </Action>
        <Action>
          <ComposeIcon />
          发帖
        </Action>
        <Action>
          <GridIcon />
          功能
        </Action>
        <Action $brand>
          <Line width={54} height={54} viewBox="0 0 56 56">
            <circle cx="28" cy="28" r="26.500" />
            <path d="M14 28h28M28 14v28" />
          </Line>
          加自选
        </Action>
      </BottomBar>

      <SystemNav>
        <IconButton aria-label="最近任务">
          <Line width={52} height={42} viewBox="0 0 52 42" strokeWidth={4} strokeLinecap="round">
            <path d="M3 4h46M3 21h46M3 38h46" />
          </Line>
        </IconButton>
        <IconButton aria-label="主屏幕">
          <Line width={84} height={44} viewBox="0 0 84 44" strokeWidth={4} strokeLinecap="round" strokeLinejoin="round">
            <path d="M2 19 30 4q5-3 10 0l28 15M14 25v12q0 5 5 5h32q5 0 5-5V25" />
          </Line>
        </IconButton>
        <IconButton aria-label="返回上一级">
          <Line width={52} height={44} viewBox="0 0 52 44" strokeWidth={4} strokeLinecap="round" strokeLinejoin="round">
            <path d="M6 8h39q4 0 4 4v25q0 4-4 4H10" />
            <path d="M2 9 14 2v7z" fill="currentColor" strokeWidth={1} />
          </Line>
        </IconButton>
      </SystemNav>
    </Page>
  );
}
